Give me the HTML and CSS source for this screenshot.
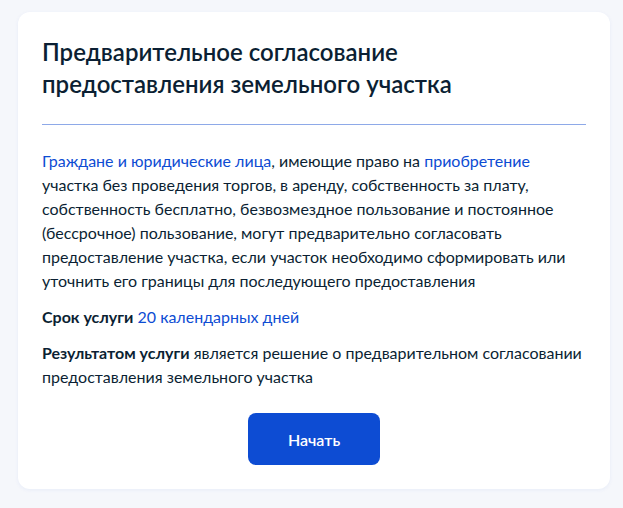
FILE: index.html
```html
<!DOCTYPE html>
<html lang="ru">
<head>
<meta charset="utf-8">
<link rel="stylesheet" href="styles.css">
</head>
<body>
<div class="card">
  <h1 class="title">Предварительное согласование предоставления земельного участка</h1>
  <hr class="divider">
  <p class="text"><a class="link">Граждане и юридические лица</a>, имеющие право на <a class="link">приобретение</a> участка без проведения торгов, в аренду, собственность за плату, собственность бесплатно, безвозмездное пользование и постоянное (бессрочное) пользование, могут предварительно согласовать предоставление участка, если участок необходимо сформировать или уточнить его границы для последующего предоставления</p>
  <p class="text small-gap"><b>Срок услуги</b> <a class="link">20 календарных дней</a></p>
  <p class="text small-gap"><b>Результатом услуги</b> является решение о предварительном согласовании предоставления земельного участка</p>
  <div class="actions"><button class="btn">Начать</button></div>
</div>
</body>
</html>
```
FILE: styles.css
```css
html, body { margin: 0; padding: 0; }
body {
  background: #f5f7fb;
  font-family: Lato, "Noto Sans", sans-serif;
  color: #0b1f33;
  padding: 12px 13px 19px 18px;
}
.card {
  background: #fff;
  border-radius: 12px;
  box-shadow: 0 1px 4px rgba(13, 76, 211, 0.06);
  padding: 24px 24px 24px 24px;
}
.title {
  margin: 0;
  font-size: 24px;
  line-height: 32px;
  font-weight: 600;
  color: #0b1f33;
  padding-right: 120px;
}
.divider {
  border: 0;
  height: 1px;
  background: #8ea9e8;
  margin: 24px 0 24px 0;
}
.text {
  margin: 0;
  font-size: 16px;
  line-height: 24px;
}
.text b { font-weight: 700; }
.small-gap { margin-top: 12px; }
.link { color: #0d4cd3; text-decoration: none; }
.actions {
  display: flex;
  justify-content: center;
  margin-top: 24px;
}
.btn {
  width: 132px;
  height: 52px;
  border: 0;
  border-radius: 8px;
  background: #0d4cd3;
  color: #fff;
  font-family: Lato, "Noto Sans", sans-serif;
  font-size: 16px;
  font-weight: 600;
}
```
